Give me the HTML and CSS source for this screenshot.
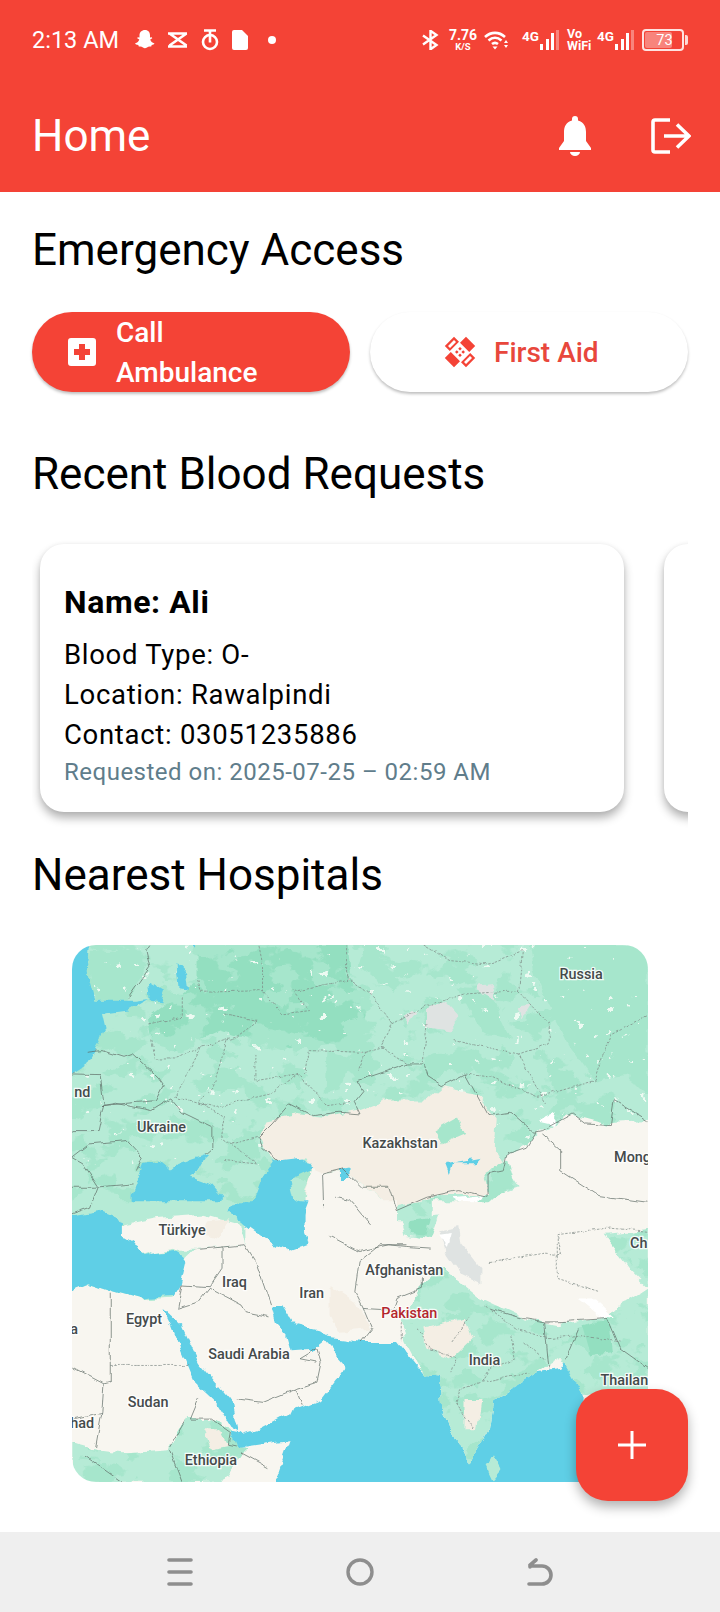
FILE: index.html
```html
<!DOCTYPE html>
<html lang="en">
<head>
    <meta charset="UTF-8">
    <meta name="viewport" content="width=device-width, initial-scale=1.0">
    <title>Home</title>
    <link rel="stylesheet" href="styles.css">
</head>
<body>
    <div class="top">
        <!-- status bar -->
        <div class="status">
            <div class="status-left">
                <span class="time">2:13 AM</span>
                <svg class="st-icon" width="20" height="20" viewBox="0 0 20 20"><path fill="#fff" d="M10 0c3.300 0 5 2.400 5 5.200v2.300l1.800-.3.500 1-2.100 1.300c.5 1.800 2 3.300 4.300 4.100-.3 1-1.600 1.200-2.800 1.500l-.5 1.500c-1.600-.3-3-.2-4.200.8-1.300 1-2.900 1-4 0-1.200-1-2.600-1.100-4.200-.8l-.5-1.500C1.600 14.800.3 14.600 0 13.600c2.300-.8 3.800-2.300 4.300-4.100L2.200 8.200l.5-1 1.800.3V5.200C4.500 2.400 6.700 0 10 0z"/></svg>
                <svg class="st-icon" width="20" height="18" viewBox="0 0 20 18"><path fill="none" stroke="#fff" stroke-width="2.600" d="M0 2.500h19M1.500 2.500l17 12M18.500 2.500l-17 12M0 15.500h19"/></svg>
                <svg class="st-icon" width="18" height="22" viewBox="0 0 18 22"><circle cx="9" cy="13" r="7" fill="none" stroke="#fff" stroke-width="2.600"/><path fill="none" stroke="#fff" stroke-width="2.600" d="M3 1.500h12M9 1.500v12"/></svg>
                <svg class="st-icon" width="16" height="20" viewBox="0 0 16 20"><path fill="#fff" d="M2 0h8l6 6v12a2 2 0 0 1-2 2H2a2 2 0 0 1-2-2V2a2 2 0 0 1 2-2z"/></svg>
                <span class="dot"></span>
            </div>
            <div class="status-right">
                <svg class="bt" width="17" height="20" viewBox="0 0 17 20"><path fill="none" stroke="#fff" stroke-width="2.400" d="M1 5.500l13.500 9.500-6 4.300V.8l6 4.300L1 14.500"/></svg>
                <div class="speed"><span class="speed-num">7.76</span><span class="speed-unit">K/S</span></div>
                <svg class="wifi" width="26" height="20" viewBox="0 0 26 20"><path fill="none" stroke="#fff" stroke-width="2.600" d="M1 7c6-5.500 14-5.500 20 0M4.500 10.500c4-3.500 9-3.500 13 0M8 14c2-1.600 4-1.600 6 0"/><path fill="#fff" d="M8.500 16.500h5L11 19.500zM22 10l2 3h-4zM22 18l-2-3h4z"/></svg>
                <div class="net">
                    <span class="net-label">4G</span>
                    <svg class="bars" width="20" height="20" viewBox="0 0 20 20"><path fill="#fff" d="M1 14h3v6H1zM7 9h3v11H7zM12 3h3v17h-3z"/><path fill="#fff" opacity=".35" d="M17 0h3v20h-3z"/></svg>
                </div>
                <div class="vowifi">Vo<br>WiFi</div>
                <div class="net">
                    <span class="net-label">4G</span>
                    <svg class="bars" width="20" height="20" viewBox="0 0 20 20"><path fill="#fff" d="M1 14h3v6H1zM7 9h3v11H7zM12 3h3v17h-3z"/><path fill="#fff" opacity=".35" d="M17 0h3v20h-3z"/></svg>
                </div>
                <div class="battery">
                    <div class="battery-body"><div class="battery-fill"></div><span class="battery-num">73</span></div>
                    <span class="battery-nub"></span>
                </div>
            </div>
        </div>
        <!-- app bar -->
        <div class="appbar">
            <h1 class="page-title">Home</h1>
            <div class="appbar-actions">
                <svg width="32" height="40" viewBox="0 0 32 40"><path fill="#fff" d="M16 0a3 3 0 0 1 3 3v1.500C25 6 27 11 27 16v9l5 7v2H0v-2l5-7v-9C5 11 7 6 13 4.500V3a3 3 0 0 1 3-3zM11 36h10a5 4 0 0 1-10 0z"/></svg>
                <svg width="40" height="36" viewBox="0 0 40 36"><path fill="none" stroke="#fff" stroke-width="3.600" stroke-linejoin="round" d="M19 2H4a2 2 0 0 0-2 2v28a2 2 0 0 0 2 2h15"/><path fill="none" stroke="#fff" stroke-width="3.600" d="M13 18h25M26 6.500L38 18 26 29.500"/></svg>
            </div>
        </div>
    </div>

    <div class="content">
        <h2 class="section-title first">Emergency Access</h2>
        <div class="quick-row">
            <button class="quick-btn solid">
                <svg width="28" height="28" viewBox="0 0 28 28"><path fill="#fff" fill-rule="evenodd" d="M3 0h22a3 3 0 0 1 3 3v22a3 3 0 0 1-3 3H3a3 3 0 0 1-3-3V3a3 3 0 0 1 3-3zM11 6v5H6v6h5v5h6v-5h5v-6h-5V6z"/></svg>
                <span class="two-line">Call<br>Ambulance</span>
            </button>
            <button class="quick-btn plain">
                <svg width="32" height="32" viewBox="0 0 32 32"><path fill="#f44336" fill-rule="evenodd" d="M22 .8l9.200 9.200-6 6-9.200-9.200zM10 31.200L.8 22l6-6 9.200 9.200zM10 .8l5 5-9.200 9.200-5-5zM10 4L4 10l2 2 6-6zM22 31.200l-5-5 9.200-9.200 5 5zM22 28l6-6-2-2-6 6z"/><path fill="#f44336" d="M16 11l1.800 1.800L16 14.600l-1.800-1.800zM11 16l1.800-1.800 1.800 1.800-1.800 1.800zM21 16l-1.800 1.800-1.800-1.800 1.800-1.800zM16 21l-1.800-1.800 1.800-1.800 1.800 1.800z"/></svg>
                <span>First Aid</span>
            </button>
        </div>

        <h2 class="section-title">Recent Blood Requests</h2>
        <div class="request-scroll">
            <div class="request-card">
                <div class="req-name">Name: Ali</div>
                <div class="req-line">Blood Type: O-</div>
                <div class="req-line">Location: Rawalpindi</div>
                <div class="req-line">Contact: 03051235886</div>
                <div class="req-time">Requested on: 2025-07-25 – 02:59 AM</div>
            </div>
            <div class="request-card"></div>
        </div>

        <h2 class="section-title near">Nearest Hospitals</h2>
        <div class="map">
            <svg width="576" height="537" viewBox="70 918 560 522">
                <defs>
                    <filter id="rough" x="-5%" y="-5%" width="110%" height="110%">
                        <feTurbulence type="fractalNoise" baseFrequency=".07" numOctaves="3" seed="4" result="n"/>
                        <feDisplacementMap in="SourceGraphic" in2="n" scale="9" xChannelSelector="R" yChannelSelector="G"/>
                    </filter>
                    <filter id="wiggle" x="-5%" y="-5%" width="110%" height="110%">
                        <feTurbulence type="fractalNoise" baseFrequency=".09" numOctaves="2" seed="9" result="n"/>
                        <feDisplacementMap in="SourceGraphic" in2="n" scale="5" xChannelSelector="R" yChannelSelector="G"/>
                    </filter>
                    <filter id="patches" x="0" y="0" width="100%" height="100%" color-interpolation-filters="sRGB">
                        <feTurbulence type="fractalNoise" baseFrequency=".03 .045" numOctaves="4" seed="7"/>
                        <feColorMatrix type="matrix" values="0 0 0 0 .65  0 0 0 0 .9  0 0 0 0 .8  0 0 0 22 -11.800"/>
                    </filter>
                    <filter id="specks" x="0" y="0" width="100%" height="100%" color-interpolation-filters="sRGB">
                        <feTurbulence type="fractalNoise" baseFrequency=".09 .12" numOctaves="3" seed="21"/>
                        <feColorMatrix type="matrix" values="0 0 0 0 .93  0 0 0 0 .98  0 0 0 0 .95  0 0 0 30 -22.500"/>
                    </filter>
                    <path id="south-green" transform="translate(58 1167) scale(.41 .326)" d="M810 360L860 250 910 200 1000 290 1100 350 1180 370 1300 340 1397 260V560H1290L1240 580 1190 470 1130 510 1030 600 1020 680 970 790 905 620 900 520 860 515 820 420zM30 720L90 740 150 750 260 740 300 650 360 650 410 690 420 730 440 740 380 840H60L30 800zM810 50L900 40 880 110 820 100zM1290 100L1397 90V260L1350 200z"/>
                    <clipPath id="south-clip"><use href="#south-green"/></clipPath>
                </defs>
                <g filter="url(#rough)">
                    <rect class="green" x="50" y="900" width="600" height="560"/>
                    <g transform="translate(58.300 904) scale(.3716 .324)">
                        <path class="dark" d="M360 42H750L760 140 800 250 770 350 700 340 600 350 500 330 420 300 300 360 240 330 230 260 320 180 360 150z"/>
                        <path class="mid" d="M1230 42H1537V420L1400 450 1330 340 1270 200 1240 120zM700 360L760 380 730 480 695 490zM1040 170L1130 200 1180 330 1100 300zM80 60L200 60 230 100 180 200 90 210zM800 42L900 160 870 180 780 100z"/>
                    </g>
                    <rect filter="url(#patches)" x="50" y="900" width="600" height="310"/>
                    <rect filter="url(#specks)" x="50" y="900" width="600" height="230"/>
                    <g transform="translate(58.300 904) scale(.3716 .324)">
                        <path class="sea" d="M-60 -20H80L70 120 90 210 200 210 230 205 180 240 110 250 120 300 70 400 30 430H-60zM305 100L330 130 335 175 310 170zM230 150L275 180 265 215 235 210zM340 20H365L350 60zM190 790L220 700 260 690 290 720 310 700 385 670 360 720 340 735 400 760 430 800 400 830 300 830 220 830 190 810zM530 740L560 690 630 675 665 715 600 750 610 800 650 830 640 900 540 900 500 830z"/>
                        <path class="gray" d="M960 240L1010 210 1050 260 1020 300 960 290zM1090 165L1130 160 1140 215 1100 190zM900 260L920 235 935 245 910 280zM1200 230L1230 225 1210 260z"/>
                        <path class="tan" d="M520 620L540 570 620 550 700 560 780 540 850 510 960 510 1000 470 1090 490 1140 560 1135 650 1160 700 1110 730 1120 790 1000 790 960 810 870 830 800 770 740 720 690 730 680 830 640 790 660 715 640 680 570 690 530 650z"/>
                        <path class="beige" d="M1260 600L1340 550 1440 580 1600 570V940H1000L1130 800 1200 770 1160 700 1170 670 1220 640zM640 800L660 715 690 730 740 720 800 770 870 830 900 940H640z"/>
                        <path class="mid" d="M980 600L1040 560 1060 610 1000 640zM450 630L510 600 520 680 480 690zM1130 720L1170 690 1190 770 1130 790z"/>
                        <path class="white" d="M1030 800L1110 790 1070 830zM1250 570L1300 545 1290 580z"/>
                        <path class="sea" d="M1010 700L1100 682 1090 695 1030 695 1020 730zM730 710L755 705 755 745 730 745z"/>
                    </g>
                    <g transform="translate(58 1167) scale(.41 .326)">
                        <path class="beige" d="M-40 300L70 245 130 270 190 290 270 285 300 170 320 145 440 130 440 70 520 130 590 125 590 50 575 0H800V60H880L880 0H1440V880H-40z"/>
                        <path class="green" d="M-40 0L430 0 440 70 440 130 320 145 280 150 215 160 150 60 90 30-40 60z"/>
                        <path class="sea" d="M-40 60L90 30 150 60 150 100 210 160 280 150 300 170 285 250 270 280 210 285 190 290 130 270 70 245-40 300zM420 0H590L575 50 590 130 545 150 500 125 440 70 400 30zM500 310L530 310 560 370 610 385 635 405 600 440 550 445 540 400 510 360zM245 320L290 370 330 480 370 540 410 600 425 690 410 680 370 600 320 540 290 450 265 370zM420 700L470 680 560 620 620 590 680 490 620 405 720 420 800 420 860 515 900 520 905 620 970 790 1020 680 1030 600 1130 510 1190 500 1200 470 1240 580V880H500L545 715 440 735z"/>
                        <path class="beige" d="M150 70L230 50 340 40 430 70 440 130 320 145 280 145 215 160 150 110z"/>
                        <path class="tan" d="M640 250L700 300 740 380 660 390 640 340zM350 60L400 55 380 110 340 100z"/>
                        <use class="green" href="#south-green" transform="scale(2.439 3.067) translate(-58 -1167)"/>
                        <path class="green" d="M1025 755L1045 800 1025 830 1010 790z"/>
                    </g>
                    <rect filter="url(#patches)" clip-path="url(#south-clip)" x="50" y="1170" width="600" height="290"/>
                    <g transform="translate(58 1167) scale(.41 .326)">
                        <path class="dark" d="M1240 370L1300 350 1310 450 1260 460zM830 60L880 50 870 100 830 95z"/>
                        <path class="tan" d="M860 380L960 350 980 410 930 470 870 440zM960 590L1000 590 990 680 960 680zM340 680L380 680 400 730 360 740z"/>
                        <path class="sea" d="M405 690L425 695 440 735 420 735z"/>
                        <path class="gray" d="M900 90L950 80 955 130 1000 200 1000 245 950 215 920 160z"/>
                        <path class="white" d="M1230 290L1270 290 1320 350 1280 340zM900 100L930 95 920 140z"/>
                    </g>
                </g>
                <g filter="url(#wiggle)">
                    <g transform="translate(58.300 904) scale(.3716 .324)">
                        <path class="border" d="M30 430L105 432 115 520 100 600 30 600M70 365L110 360 165 380 190 370 255 440 270 465 250 510 110 525M110 525L145 518 240 540 290 505 320 545 400 590 400 650 380 670M180 200L235 110 225 60 235 42M30 680L75 640 175 630 215 680 200 720M30 770L90 770 190 760M520 620L555 580 600 520 660 555 730 545 785 550 770 515 795 480 780 450 910 400 950 400 960 435 1000 465 1060 430 1120 555 1180 545 1240 605 1260 600 1340 550 1375 580 1440 585 1450 510 1537 570M1260 610L1310 660 1310 720 1410 795 1537 815M520 620L530 650 570 690M690 830L687 730 740 715 790 770 860 770 880 840 960 800 1040 780 1120 800 1120 730 1160 720 1170 670 1220 650 1245 605M720 800L760 810 810 880M30 850L80 830 100 770 60 700 30 680"/>
                        <path class="admin" d="M360 150L370 185 530 180 530 100 520 42M530 180L580 250 650 240 610 180 750 150 750 42M750 140L820 200 870 280 840 350 910 400M870 280L960 225 1060 190 1200 180 1210 60 1120 100 1020 90 950 42M960 280L950 400M1200 180L1280 280 1280 340 1200 370 1270 520M1030 330L1200 370M1060 430L1130 440 1250 500 1400 450 1440 310 1537 255M320 200L320 260 230 280M240 330L250 385 300 385 370 350 460 320 520 270 430 250M370 350L310 480 300 500 400 530 550 490 620 430 700 525 760 515M440 320L400 470 360 515 430 560 420 620 520 700 430 690M510 370L510 450 620 430M640 430L650 360 800 365 780 420M800 365L850 350M450 640L520 620"/>
                    </g>
                    <g transform="translate(58 1167) scale(.41 .326)">
                        <path class="border" d="M320 145L440 130 465 180 500 310M385 135L385 200 355 255 290 250 280 320 330 300 355 260 430 310 440 330 500 345M710 180L700 270 720 320 740 380 715 420M640 105L710 150 780 130 820 135 880 140M710 180L760 130 820 130M720 320L790 325 800 290 860 260 860 230M790 325L830 330M120 270V540L105 545 30 495M105 545L100 630 30 650M100 630L85 735M330 590L310 650 360 650 405 690 400 725 420 730M420 590L480 600 560 560 610 540 620 480 610 440 570 470 610 480M560 560L575 610M260 735L300 650M60 760L150 840M260 740L290 840M430 750L495 795M1020 320L1100 350 1150 360 1180 360 1300 350 1330 440 1397 500M1150 360L1160 500M1230 380L1200 470"/>
                        <path class="admin" d="M1180 100L1300 80 1397 90M1180 100L1180 230 1280 270M1020 180L1150 155 1190 160 1180 100M810 360L810 420M850 380L880 440 940 470 930 510M1010 310L1080 380 1160 410 1230 400 1330 420M930 420L970 350M1070 400L1080 470 1020 500 1000 540 950 560 940 600 980 680M1000 540L1120 510M1100 420L1150 470M120 490H310"/>
                    </g>
                </g>
                <text class="label" x="565" y="951">Russia</text>
                <text class="label" x="157" y="1100">Ukraine</text>
                <text class="label" x="389" y="1115">Kazakhstan</text>
                <text class="label" x="80" y="1066">nd</text>
                <text class="label" x="615" y="1129">Mong</text>
                <text class="label" x="177" y="1200">Türkiye</text>
                <text class="label" x="621" y="1213">Ch</text>
                <text class="label" x="393" y="1239">Afghanistan</text>
                <text class="label" x="228" y="1250">Iraq</text>
                <text class="label" x="303" y="1261">Iran</text>
                <text class="label pk" x="398" y="1281">Pakistan</text>
                <text class="label" x="140" y="1286">Egypt</text>
                <text class="label" x="72" y="1296">a</text>
                <text class="label" x="242" y="1320">Saudi Arabia</text>
                <text class="label" x="471" y="1326">India</text>
                <text class="label" x="607" y="1346">Thailan</text>
                <text class="label" x="144" y="1367">Sudan</text>
                <text class="label" x="80" y="1388">had</text>
                <text class="label" x="205" y="1424">Ethiopia</text>
            </svg>
        </div>
    </div>

    <button class="fab">
        <svg width="30" height="30" viewBox="0 0 30 30"><path fill="#fff" d="M13.500 1h3v12.500H29v3H16.500V29h-3V16.500H1v-3h12.500z"/></svg>
    </button>

    <div class="navbar">
        <svg width="26" height="28" viewBox="0 0 26 28"><path fill="none" stroke="#8e8e8e" stroke-width="3.600" stroke-linecap="round" d="M2 2h22M2 14h22M2 26h22"/></svg>
        <svg width="28" height="28" viewBox="0 0 28 28"><circle cx="14" cy="14" r="12" fill="none" stroke="#8e8e8e" stroke-width="3.400"/></svg>
        <svg width="26" height="28" viewBox="0 0 26 28"><path fill="none" stroke="#8e8e8e" stroke-width="3.600" stroke-linecap="round" d="M2 26h13a9 9 0 0 0 0-18H3M9 2L3 7l0 2"/></svg>
    </div>
</body>
</html>
```

FILE: styles.css
```css
* {
    box-sizing: border-box;
}
body {
    font-family: Roboto, "Liberation Sans", sans-serif;
    background-color: #fff;
    margin: 0;
    padding: 0;
    width: 720px;
    height: 1612px;
    position: relative;
    overflow: hidden;
    display: flex;
    flex-direction: column;
}

/* top red area */
.top {
    background-color: #f44336;
    color: #fff;
    height: 192px;
    flex-shrink: 0;
}
.status {
    height: 80px;
    padding: 0 32px;
    display: flex;
    align-items: center;
    justify-content: space-between;
}
.status-left {
    display: flex;
    align-items: center;
}
.time {
    font-size: 23.500px;
    width: 103px;
    white-space: nowrap;
}
.st-icon {
    margin-right: 13px;
}
.dot {
    width: 8px;
    height: 8px;
    border-radius: 50%;
    background-color: #fff;
    margin-left: 7px;
}
.status-right {
    display: flex;
    align-items: center;
}
.bt {
    margin-right: 9px;
}
.speed {
    width: 30px;
    display: flex;
    flex-direction: column;
    align-items: center;
    font-weight: 700;
    line-height: 1;
    margin-right: 6px;
}
.speed-num {
    font-size: 14px;
}
.speed-unit {
    font-size: 9.500px;
}
.wifi {
    margin-right: 12px;
}
.net {
    display: flex;
    align-items: flex-start;
    width: 37px;
    height: 20px;
}
.net-label {
    font-size: 13.500px;
    font-weight: 700;
    line-height: 13px;
    width: 17px;
}
.vowifi {
    font-size: 12.500px;
    font-weight: 700;
    line-height: 12px;
    width: 26px;
    margin: 0 4px 0 8px;
}
.battery {
    display: flex;
    align-items: center;
    margin-left: 8px;
}
.battery-body {
    width: 42px;
    height: 22px;
    border: 2px solid rgba(255, 255, 255, 0.85);
    border-radius: 4px;
    position: relative;
    display: flex;
    align-items: center;
    justify-content: center;
}
.battery-fill {
    position: absolute;
    left: 1px;
    top: 1px;
    bottom: 1px;
    width: 27px;
    background-color: rgba(255, 255, 255, 0.35);
    border-radius: 2px;
}
.battery-num {
    font-size: 14.500px;
    position: relative;
    padding-left: 3px;
}
.battery-nub {
    width: 3px;
    height: 10px;
    background-color: #fff;
    opacity: 0.8;
    margin-left: 1px;
    border-radius: 0 2px 2px 0;
}
.appbar {
    height: 112px;
    padding: 0 29px 0 32px;
    display: flex;
    align-items: center;
    justify-content: space-between;
}
.page-title {
    font-size: 44px;
    font-weight: 400;
    margin: 0 0 1px;
}
.appbar-actions {
    display: flex;
    align-items: center;
    gap: 60px;
}

/* content */
.content {
    padding: 0 32px;
    flex: 1;
    display: flex;
    flex-direction: column;
}
.section-title {
    font-size: 44px;
    font-weight: 400;
    line-height: 48px;
    color: #000;
    margin: 58px 0 0;
}
.section-title.first {
    margin-top: 34px;
}
.section-title.near {
    margin-top: 15px;
}
.quick-row {
    display: flex;
    gap: 20px;
    margin-top: 38px;
}
.quick-btn {
    flex: 0 0 318px;
    height: 80px;
    border: 0;
    border-radius: 40px;
    font-family: inherit;
    font-size: 28px;
    font-weight: 500;
    display: flex;
    align-items: center;
    box-shadow: 0 2px 3px rgba(0, 0, 0, 0.25);
}
.quick-btn.solid {
    background-color: #f44336;
    color: #fff;
    padding-left: 36px;
    gap: 20px;
}
.quick-btn.plain {
    background-color: #fff;
    color: #e8473c;
    padding-left: 74px;
    gap: 18px;
}
.two-line {
    text-align: left;
    line-height: 40px;
    padding-top: 2px;
}
.request-scroll {
    display: flex;
    gap: 40px;
    overflow: hidden;
    margin-top: 34px;
    padding: 12px 0 24px 8px;
}
.request-card {
    flex: 0 0 584px;
    height: 268px;
    background-color: #fff;
    border-radius: 24px;
    padding: 38px 24px 0;
    box-shadow: 0 6px 10px rgba(0, 0, 0, 0.3), 0 0 4px rgba(0, 0, 0, 0.05);
}
.req-name {
    font-size: 32px;
    font-weight: 700;
    line-height: 40px;
    letter-spacing: 0.6px;
    margin-bottom: 13px;
}
.req-line {
    font-size: 27.500px;
    line-height: 40px;
    letter-spacing: 0.7px;
}
.req-time {
    font-size: 24px;
    line-height: 34px;
    letter-spacing: 0.5px;
    color: #607d8b;
}

/* map */
.map {
    width: 576px;
    height: 537px;
    margin: 46px 0 0 40px;
    border-radius: 24px;
    overflow: hidden;
}
.map svg {
    display: block;
}
.green { fill: #b6ebd6; }
.dark { fill: #93dfc0; }
.mid { fill: #a6e6cc; }
.sea { fill: #5fcfe6; }
.beige { fill: #f8f6f0; }
.tan { fill: #f4eee4; }
.gray { fill: #dfe3e2; }
.white { fill: #fff; }
.border, .admin {
    fill: none;
    stroke-width: 0.7;
    vector-effect: non-scaling-stroke;
}
.border {
    stroke: #5f6b66;
}
.admin {
    stroke: #7b8682;
    stroke-dasharray: 2.500 1.500;
}
.label {
    font-size: 14px;
    font-weight: 500;
    text-anchor: middle;
    fill: #444a4b;
    stroke: rgba(255, 255, 255, 0.85);
    stroke-width: 2.500px;
    paint-order: stroke;
}
.label.pk {
    fill: #b3262d;
}

/* floating button */
.fab {
    position: absolute;
    left: 576px;
    top: 1389px;
    width: 112px;
    height: 112px;
    border: 0;
    border-radius: 32px;
    background-color: #f44336;
    display: flex;
    align-items: center;
    justify-content: center;
    box-shadow: 0 6px 12px rgba(0, 0, 0, 0.3);
}

/* android nav */
.navbar {
    height: 80px;
    flex-shrink: 0;
    background-color: #efefef;
    display: flex;
    align-items: center;
    justify-content: space-between;
    padding: 0 167px;
}
```
